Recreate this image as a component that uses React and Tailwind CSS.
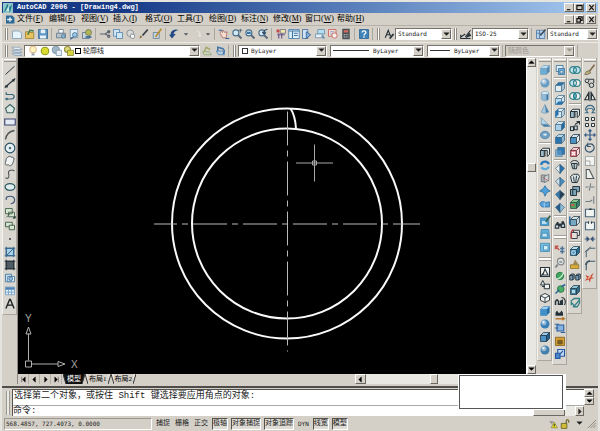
import { useState } from "react";

const menus = [
  ["文件", "F"],
  ["编辑", "E"],
  ["视图", "V"],
  ["插入", "I"],
  ["格式", "O"],
  ["工具", "T"],
  ["绘图", "D"],
  ["标注", "N"],
  ["修改", "M"],
  ["窗口", "W"],
  ["帮助", "H"],
];

const standardTools = [
  "new", "open", "save", "|",
  "print", "preview", "publish", "|",
  "cut", "copyDoc", "paste", "match", "blockEdit", "|",
  "undo", "drop", "redo", "drop", "|",
  "pan", "zoomRt", "zoomWin", "zoomPrev", "|",
  "props", "designCenter", "palettes", "sheetSet", "markup", "calc", "|",
  "help", "|",
];

const drawTools = [
  "line", "xline", "pline", "polygon", "rect", "arc", "circle", "revcloud", "spline", "ellipse",
  "ellipseArc", "insertBlock", "makeBlock", "point", "hatch", "gradient", "region", "table", "mtext",
];

const solidTools = [
  "box", "sphere", "cylinder", "cone", "wedge", "torus", "|",
  "extrude", "revolve", "slice", "section", "interfere", "|",
  "setDraw", "setView", "setProfile", "=",
  "wire2d", "wire3d", "hidden", "flat", "gouraud", "flatEdges", "gouraudEdges",
];

const viewTools = [
  "views", "|", "top", "bottom", "left", "right", "front", "back", "|",
  "swIso", "seIso", "neIso", "nwIso", "|", "camera", "=",
  "orbitPan", "orbitZoom", "orbit", "orbitCont", "swivel", "distance", "clip", "clipFront", "clipBack",
];

const editTools = [
  "union", "subtract", "intersect", "|",
  "extrude", "moveFace", "offsetFace", "deleteFace", "rotateFace", "taperFace", "copyFace", "colorFace", "|",
  "copyEdge", "colorEdge", "|", "imprint", "clean", "separate", "shell", "check",
];

const modifyTools = [
  "erase", "copy", "mirror", "offset", "array", "move", "rotate", "scale", "stretch", "trim",
  "extend", "breakPoint", "break", "join", "chamfer", "fillet", "explode",
];

const ink = "#26323a";

function Cube({ top = "#b9def2", front = "#6aaed8", side = "#2f6ea5", stroke = "#2c5878" }) {
  return (
    <g stroke={stroke} strokeWidth="1" strokeLinejoin="round">
      <path d="M2 6 6 2h8l-4 4z" fill={top} />
      <path d="M2 6h8v8H2z" fill={front} />
      <path d="m10 6 4-4v8l-4 4z" fill={side} />
    </g>
  );
}

function Ball({ color = "#4c8fc2" }) {
  return (
    <g>
      <circle cx="8" cy="8" r="6" fill={color} />
      <circle cx="6.500" cy="6" r="3.500" fill="#fff" opacity=".45" />
      <circle cx="6" cy="5.500" r="1.500" fill="#fff" opacity=".8" />
    </g>
  );
}

function Lens() {
  return (
    <g>
      <path d="m9 9 5 5" stroke="#5b6a78" strokeWidth="2.500" />
      <circle cx="6.500" cy="6.500" r="4" fill="#d5e9f5" stroke="#4a6f8c" strokeWidth="1.500" />
    </g>
  );
}

function Rings({ a = "#bfe3ea", b = "#bfe3ea", mid = "#bfe3ea" }) {
  return (
    <g stroke="#2e7f8c" strokeWidth="1.500">
      <circle cx="5.500" cy="8" r="4.500" fill={a} />
      <circle cx="10.500" cy="8" r="4.500" fill={b} />
      <path d="M8 4.300a4.500 4.500 0 0 1 0 7.400 4.500 4.500 0 0 1 0-7.400z" fill={mid} />
    </g>
  );
}

function Iso({ a, b }) {
  return (
    <g stroke="#34566f" strokeWidth=".8">
      <path d="M8 2 2 7l6 7z" fill={a} />
      <path d="m8 2 6 5-6 7z" fill={b} />
    </g>
  );
}

const icons = {
  new: <path d="M2 4h9l3 3v7H2z" fill="#e6f3fb" stroke="#7096b5" />,
  open: (
    <g>
      <path d="M2 5h5l1 1h5v8H2z" fill="#e5c35d" stroke="#9b7b25" />
      <path d="m5 9 3-6 5 1" fill="none" stroke="#3f7a46" strokeWidth="2" />
    </g>
  ),
  save: (
    <g>
      <path d="M2 2h12v12H2z" fill="#5c96c4" stroke="#315f88" />
      <path d="M5 2h6v5H5zM4 10h8v4H4z" fill="#e8f1f7" />
    </g>
  ),
  print: (
    <g stroke="#5e7384">
      <path d="M5 2h6v5H5z" fill="#fff" />
      <path d="M2 7h12v6H2z" fill="#b5c3cd" />
      <circle cx="11" cy="11" r="2.500" fill="#7fb3d8" />
    </g>
  ),
  preview: (
    <g>
      <path d="M3 2h10v11H3z" fill="#e1effa" stroke="#6485a3" />
      <circle cx="9" cy="9" r="3" fill="#9dcbe9" stroke="#42678a" />
      <path d="m7 12-4 3" stroke="#42678a" strokeWidth="2" />
    </g>
  ),
  publish: (
    <g>
      <path d="M2 6h9v8H2z" fill="#c9d5df" stroke="#53697d" />
      <circle cx="10" cy="6" r="4" fill="#b7b457" stroke="#5d7347" />
      <path d="M6 12h8" stroke="#2d5f93" strokeWidth="2" />
    </g>
  ),
  cut: (
    <g fill="none" stroke="#5a646c" strokeWidth="1.500">
      <path d="M1 8h7l6-4M8 8l6 3" />
      <circle cx="13" cy="5" r="1.500" />
      <circle cx="13" cy="11" r="1.500" />
    </g>
  ),
  copyDoc: (
    <g fill="#cfe6f7" stroke="#4c7ea8">
      <path d="M2 2h8v9H2z" />
      <path d="M6 6h8v8H6z" />
    </g>
  ),
  paste: (
    <g stroke="#758089">
      <circle cx="7" cy="7" r="4.500" fill="#d7d9d6" />
      <path d="m8 8 5 1-1 5-5-1z" fill="#fff" />
    </g>
  ),
  match: (
    <g>
      <path d="m13 2-7 8" stroke="#3c4247" strokeWidth="2.500" />
      <path d="m2 14 1-4 3 2z" fill="#8a6533" />
    </g>
  ),
  blockEdit: (
    <g>
      <path d="M3 6h8v8H3z" fill="#c5d5e0" stroke="#5c7c94" />
      <path d="m14 1-6 8-2 3" stroke="#b98a2d" strokeWidth="2" fill="none" />
    </g>
  ),
  undo: <path d="M2 9c0-4 3-7 8-7l3 1c-4 0-6 2-7 5h3l-5 6-4-5z" fill="#224c83" />,
  redo: <path d="M14 9c0-4-3-7-8-7L3 3c4 0 6 2 7 5H7l5 6 4-5z" fill="#e3e0d9" stroke="#c9c5bc" />,
  drop: <path d="M5 7h6l-3 3z" fill="#4d5257" />,
  pan: (
    <g>
      <path d="M3 7c0-3 2-3 3-1l1-3 2 3 3-1-1 8H6z" fill="#f3ded0" stroke="#a65f5c" />
      <path d="M1 3h5M10 14h5" stroke="#2f5f98" strokeWidth="1.500" />
    </g>
  ),
  zoomRt: (
    <g>
      <Lens />
      <path d="M10 3h5M12.500 1v5" stroke="#39566c" />
    </g>
  ),
  zoomWin: (
    <g>
      <Lens />
      <path d="M4 5h5v3H4z" fill="#3a73a8" />
    </g>
  ),
  zoomPrev: (
    <g>
      <Lens />
      <path d="M14 2c-4 0-5 2-5 5M7 5l2 3 3-2" fill="none" stroke="#2d4664" strokeWidth="1.500" />
    </g>
  ),
  props: (
    <g>
      <path d="M2 2h4v4H2z" fill="#c94848" />
      <path d="M7 2h7v5H7z" fill="#eee7a6" stroke="#6b6787" />
      <path d="M5 7v7M9 7v7M3 9h10" stroke="#6a4f88" strokeWidth="1.500" />
    </g>
  ),
  designCenter: (
    <g>
      <path d="M1 2h14v12H1z" fill="#dff0fa" stroke="#3f73a0" />
      <path d="M1 4h14M6 4v10M8 7h5M8 10h5" stroke="#3f73a0" strokeWidth="1.500" />
    </g>
  ),
  palettes: (
    <g>
      <path d="M2 2h7v12H2z" fill="#cfe4f4" stroke="#375f91" />
      <path d="m7 5 6 4-6 5z" fill="#7eb2dc" stroke="#2f558b" />
    </g>
  ),
  sheetSet: (
    <g stroke="#628ba9">
      <path d="M5 2h9v6H5z" fill="#b5ddef" />
      <path d="M2 8h10v5H2z" fill="#e7eff4" />
      <path d="m10 10 4 4" strokeWidth="2" />
    </g>
  ),
  markup: (
    <g>
      <path d="M2 2h10v9H2z" fill="#f7dcda" stroke="#c4514c" />
      <circle cx="10" cy="10" r="3.500" fill="#f6efee" stroke="#c4514c" />
      <path d="M4 5h6M4 8h3" stroke="#6890b5" />
    </g>
  ),
  calc: (
    <g>
      <path d="M3 1h10v14H3z" fill="#4b5054" />
      <path d="M5 3h6v3H5z" fill="#d46d5f" />
      <path d="M5 9h6M5 12h6" stroke="#d9dcdf" strokeWidth="1.500" strokeDasharray="1.500 1" />
    </g>
  ),
  help: (
    <g>
      <path d="M2 2h12v12H2z" fill="#3f83b8" stroke="#255e90" />
      <path d="M5.500 6c0-3 5-3 5 0 0 2-2.500 1.500-2.500 4M8 11v2" fill="none" stroke="#fff" strokeWidth="1.700" />
    </g>
  ),
  textStyle: (
    <g fill="none" stroke={ink} strokeWidth="1.500">
      <path d="m3 13 4-10 3 8M4 9h5" />
      <path d="m9 14 5-6" strokeWidth="2.500" />
    </g>
  ),
  dimStyle: (
    <g fill="none" stroke={ink} strokeWidth="1.500">
      <path d="M1 9v5h13M1 12l6-4M7 12l7-9" />
      <path d="m9 12 3-5 2 3z" fill={ink} />
    </g>
  ),
  tableStyle: (
    <g>
      <path d="M2 3h11v11H2z" fill="#b4d3ec" stroke="#456f9b" />
      <path d="m14 2-7 8" stroke="#3a4650" strokeWidth="2" />
      <path d="M2 7h6M6 3v11" stroke="#456f9b" />
    </g>
  ),
  layers: (
    <g stroke="#8ba0b2" fill="#c6d8e5">
      <path d="M1 11h10l4 3H5z" />
      <path d="M1 7h10l4 3H5z" />
      <path d="M1 3h10l4 3H5z" fill="#e7eef3" />
    </g>
  ),
  makeCurrent: (
    <g>
      <path d="M2 9h9l3 4H4z" fill="#cfd9b9" stroke="#8b9a72" />
      <path d="m4 9 3-6 5 3" fill="none" stroke="#a5a966" strokeWidth="2" />
    </g>
  ),
  layerPrev: (
    <g>
      <path d="M3 8h9l2 5H6z" fill="#b4cce0" stroke="#4b7aa3" />
      <path d="M5 8V3l7 2c2 2 2 5 0 7" fill="none" stroke="#3f78aa" strokeWidth="2" />
    </g>
  ),
  bulb: (
    <g>
      <circle cx="8" cy="6" r="4.500" fill="#fff3c0" stroke="#d19967" />
      <path d="M6 11h4v3H6z" fill="#9aa1a8" />
    </g>
  ),
  sun: <circle cx="8" cy="8" r="5" fill="#d9dc2e" stroke="#92981d" strokeWidth="1.500" />,
  freeze: (
    <g>
      <circle cx="6.500" cy="6.500" r="5" fill="#9fb8c8" stroke="#708b9e" />
      <path d="M7 7h7v7H7z" fill="#e9f1f6" stroke="#7593a8" />
    </g>
  ),
  lock: (
    <g>
      <circle cx="6" cy="6" r="4" fill="#e4dd7b" stroke="#8c8c3d" strokeWidth="1.500" />
      <path d="M6 7h8v7H6z" fill="#d9d33f" stroke="#82843a" />
    </g>
  ),
  line: <path d="M2 14 14 3" stroke={ink} strokeWidth="1.300" />,
  xline: (
    <g>
      <path d="M1 14 15 2" stroke={ink} strokeWidth="1.500" />
      <path d="M2 11h3v3H2zM11 3h3v3h-3z" fill={ink} />
    </g>
  ),
  pline: (
    <g fill="none" stroke="#35647b" strokeWidth="1.600">
      <path d="M3 3v3h8c4 1 3 6-1 6H4" />
      <path d="M2 12h3" strokeWidth="3" />
    </g>
  ),
  polygon: <path d="m8 2 6 5-2 6H4L2 7z" fill="#d9e8e5" stroke="#3e625f" strokeWidth="1.500" />,
  rect: <path d="M1 4h14v8H1z" fill="#e5ebf5" stroke="#3b4471" strokeWidth="1.500" />,
  arc: <path d="M2 14C3 7 7 3 14 2" fill="none" stroke="#4d5153" strokeWidth="1.700" />,
  circle: (
    <g>
      <circle cx="8" cy="8" r="6.500" fill="#e3eef0" stroke="#244c60" strokeWidth="1.500" />
      <path d="M6.500 8h3M8 6.500v3" stroke="#244c60" strokeWidth="1.500" />
    </g>
  ),
  revcloud: (
    <path
      d="M5 3c2-2 4-1 5 0 3-1 4 2 3 4-1 3-1 4-2 5-1 3-4 3-5 1-4 1-5-1-4-3 1-2 0-6 3-7z"
      fill="#f2f3f0"
      stroke="#4a5760"
      strokeWidth="1.300"
    />
  ),
  spline: <path d="M2 13c5 3 5-3 4-6s3-6 8-3" fill="none" stroke="#4d5153" strokeWidth="1.400" />,
  ellipse: <ellipse cx="8" cy="8" rx="6.500" ry="4.500" fill="#dfeceb" stroke="#2b5a67" strokeWidth="1.700" />,
  ellipseArc: <path d="M3 8C2 4 5 3 8 3c8 0 8 9 1 10" fill="none" stroke="#3c5575" strokeWidth="1.600" />,
  insertBlock: (
    <g fill="#d7e6cf" stroke="#466150" strokeWidth="1.200">
      <path d="M2 2h9v7H2zM6 7h8v6H6z" />
      <path d="m3 14 5-5" />
      <path d="M12 15h3v-3z" fill="#111" />
    </g>
  ),
  makeBlock: (
    <g fill="#d7e6cf" stroke="#466150" strokeWidth="1.300">
      <path d="M2 3h9v6H2z" />
      <path d="M7 7h7v6H7z" />
    </g>
  ),
  point: <circle cx="8" cy="8" r="1.200" fill={ink} />,
  hatch: (
    <g stroke="#31638b" strokeWidth="1.300">
      <path d="M3 3h10v10H3z" fill="#a8cfe8" />
      <path d="M1 3h14M1 13h14M3 1v14M13 1v14M4 12l8-8" />
    </g>
  ),
  gradient: (
    <g stroke="#26323a" strokeWidth="1.400">
      <path d="M3 3h10v10H3z" fill="#4f5c66" />
      <path d="M1 3h14M1 13h14M3 1v14M13 1v14" />
    </g>
  ),
  region: (
    <g stroke="#47799f" strokeWidth="1.200">
      <path d="M2 3h8v10H2z" fill="#c4deef" />
      <path d="M5 6h9v7H5z" fill="#e8f2f9" />
      <circle cx="9" cy="9" r="2.500" fill="#8ebcdc" />
    </g>
  ),
  table: (
    <g stroke="#6d99c0">
      <path d="M2 3h12v10H2z" fill="#dcecf8" />
      <path d="M2 3h12v3H2z" fill="#4c82b5" />
      <path d="M6 6v7M10 6v7M2 9.500h12" />
    </g>
  ),
  mtext: <path d="m2.500 14 5-12h1l5 12M4.500 9.500h7" fill="none" stroke="#1b1f22" strokeWidth="1.800" />,
  box: <Cube stroke="#7fa3bb" side="#4f8ab8" />,
  sphere: <Ball color="#6b9dc2" />,
  cylinder: (
    <g stroke="#7fa3bb">
      <path d="M3 4v8c1 3 9 3 10 0V4z" fill="#8fb9d6" />
      <ellipse cx="8" cy="4" rx="5" ry="2" fill="#dff0f9" />
      <path d="M11 6v7" stroke="#3d75a3" strokeWidth="2" />
    </g>
  ),
  cone: (
    <g>
      <path d="M8 2 3 12c1 2 9 2 10 0z" fill="#a9cbe0" stroke="#7899ae" />
      <path d="m8 3 1 10 4-1z" fill="#4d83ac" />
    </g>
  ),
  wedge: (
    <g stroke="#7899ae">
      <path d="M3 2v9l4 3h8z" fill="#b4d7ea" />
      <path d="m3 11 4 3h8l-4-3z" fill="#3f79a7" />
    </g>
  ),
  torus: (
    <g>
      <ellipse cx="8" cy="8" rx="6" ry="5" fill="#6c9fc3" stroke="#537d9c" />
      <ellipse cx="8" cy="7.500" rx="2.500" ry="1.500" fill="#dbe8ef" />
    </g>
  ),
  extrude: (
    <g stroke={ink} strokeWidth="1.300">
      <path d="M2 6h5v8H2z" fill="#9bb9c9" />
      <path d="m2 6 3-3h9v8l-3 3V6z" fill="#dce4e4" />
      <path d="M8 6v8" />
    </g>
  ),
  revolve: (
    <g fill="none" stroke="#2b79b8" strokeWidth="3">
      <path d="M3 8c0-6 9-6 10-1" />
      <path d="M3 11c3 4 9 3 10-1" stroke="#5fa9dc" />
    </g>
  ),
  slice: (
    <g stroke="#5f686d">
      <path d="M3 4h6v9H3z" fill="#a9b3b7" />
      <path d="m7 6 6-3v8l-6 3z" fill="#cdd5d8" />
      <path d="m5 7 8 5" stroke="#b55a52" />
    </g>
  ),
  section: (
    <path d="m8 1 2.500 4 4.500 3-4.500 2L8 15l-2-5-5-2 4.500-3z" fill="#4ea0d8" stroke="#2b6ca0" />
  ),
  interfere: (
    <g stroke="#2f6ea5">
      <path d="M1 8c2-5 6-3 8-2l5-1v7H4z" fill="#58a2d8" />
      <path d="M7 6v7" stroke="#bfe0f5" />
    </g>
  ),
  setDraw: (
    <g>
      <path d="M2 4h11v10H2z" fill="#4e9fcd" stroke="#377ca5" />
      <path d="M4 8h6v4H4z" fill="#b7def0" />
      <path d="m15 1-6 8" stroke="#37614d" strokeWidth="2.200" />
    </g>
  ),
  setView: (
    <g>
      <path d="M3 2h10l1 12H2z" fill="#60afd9" stroke="#3b84ad" />
      <path d="M4 7h7v5H4z" fill="#c9e7f5" stroke="#3b84ad" />
    </g>
  ),
  setProfile: (
    <g>
      <path d="M2 3h12v11H2z" fill="#74bde1" stroke="#3b84ad" />
      <path d="M6 6h6v6H6z" fill="#d5edf8" stroke="#3b84ad" />
    </g>
  ),
  wire2d: (
    <g fill="#f4f4f0" stroke={ink} strokeWidth="1.400">
      <path d="M2 2h12v12H2z" />
      <path d="m8 4 4 8H5zM2 14l4-5" />
    </g>
  ),
  wire3d: (
    <g fill="#eef1ef" stroke={ink} strokeWidth="1.300">
      <path d="m5 2 3 6H2z" />
      <path d="M7 7h7v6H7zM4 10h4" />
    </g>
  ),
  hidden: (
    <g fill="#f1f2ef" stroke={ink} strokeWidth="1.200">
      <path d="m8 2 6 3v6l-6 3-6-3V5z" />
      <path d="m2 5 6 3 6-3M8 8v6" fill="none" />
    </g>
  ),
  flat: <Cube stroke="#4f92c4" top="#9bd0ef" front="#3f8fc9" side="#246aa3" />,
  gouraud: <Ball color="#3980b8" />,
  flatEdges: <Cube stroke="#1e3444" top="#9cc9e4" front="#4f93c4" side="#255e8e" />,
  gouraudEdges: <Ball color="#427fae" />,
  views: (
    <g stroke="#356b91">
      <path d="M3 2h9v8H3z" fill="#dceefa" />
      <path d="M6 6h8v8H6z" fill="#6eb0dd" />
      <path d="M8 9h4v3H8z" fill="#fff" />
    </g>
  ),
  top: <Cube top="#2974ae" front="#e2edf2" side="#a9c3d3" stroke="#48718e" />,
  bottom: (
    <g>
      <Cube top="#e2edf2" front="#b9dcef" side="#d0dfe7" stroke="#48718e" />
      <path d="m2 14 4-4h8l-4 4z" fill="#2974ae" />
    </g>
  ),
  left: (
    <g>
      <Cube top="#e2edf2" front="#d7e7f0" side="#b8cfdc" stroke="#48718e" />
      <path d="m2 6 4-4v8l-4 4z" fill="#2974ae" />
    </g>
  ),
  right: <Cube top="#d7e7f0" front="#a9d0e8" side="#2268a1" stroke="#48718e" />,
  front: <Cube top="#b8d5e6" front="#2974ae" side="#8db4cc" stroke="#386587" />,
  back: (
    <g stroke="#386587">
      <path d="M5 2h9v9H5z" fill="#2d7bb6" />
      <path d="M2 5h9v9H2z" fill="#5599cb" opacity=".7" />
    </g>
  ),
  swIso: <Iso a="#e8f1f6" b="#2872ad" />,
  seIso: <Iso a="#cde1ed" b="#4b8dbe" />,
  neIso: <Iso a="#327ab1" b="#233e52" />,
  nwIso: <Iso a="#245f92" b="#8fc0de" />,
  camera: (
    <g fill={ink}>
      <path d="M1 9 4 4h2v2h4V3h3l2 5v4H9v-2H7v3H1z" />
      <circle cx="4" cy="10" r="1.700" fill="#bfd0d8" />
      <circle cx="12" cy="9" r="1.700" fill="#bfd0d8" />
    </g>
  ),
  orbitPan: (
    <g fill="none" strokeWidth="2">
      <path d="m2 3 5 5M2 7V3h4" stroke="#c1574e" />
      <path d="M8 6h6M8 10h6M11 3v10" stroke="#51759a" />
    </g>
  ),
  orbitZoom: (
    <g>
      <path d="m5 10-3 4" stroke="#7c8285" strokeWidth="2.500" />
      <circle cx="9" cy="6" r="4.500" fill="#e1e3e1" stroke="#7c8285" strokeWidth="1.500" />
      <path d="M7 5h4v3H7z" fill="#9aa3a6" />
    </g>
  ),
  orbit: (
    <g>
      <circle cx="8" cy="8" r="5" fill="#3fa45c" stroke="#246f45" />
      <path d="M3 12c4 0 8-4 10-9" stroke="#d1efd7" strokeWidth="1.500" fill="none" />
    </g>
  ),
  orbitCont: (
    <g>
      <circle cx="9" cy="8" r="4.500" fill="#4cad65" stroke="#246f45" />
      <path d="m2 14 5-5M10 5l5-3" stroke="#2f6a93" strokeWidth="2" />
    </g>
  ),
  swivel: (
    <g fill="none" stroke={ink} strokeWidth="1.500">
      <path d="M2 12V7l2-2 2 2v4h3V7l2-1v6" strokeWidth="2" />
      <path d="M10 2c5 0 6 6 4 10" />
    </g>
  ),
  distance: (
    <g>
      <path d="M2 9V5l2-3 2 3h2l2-3 2 3v4z" fill={ink} />
      <path d="M2 13h12m-3-2 3 2-3 2" stroke="#b97933" strokeWidth="1.700" fill="none" />
    </g>
  ),
  clip: (
    <g stroke="#2c5f9e" strokeWidth="1.500">
      <path d="M4 4h9v8H4z" fill="#88b5e0" />
      <path d="M1 3h6M1 8h5M9 14h6" />
    </g>
  ),
  clipFront: (
    <g stroke="#7a5a1e">
      <path d="M2 3h12v11H2z" fill="#d5a02e" />
      <path d="M5 7h6v5H5z" fill="#775b28" />
    </g>
  ),
  clipBack: (
    <g stroke="#2757a0" strokeWidth="1.500">
      <path d="M5 2h9v9H5z" fill="#c5daf2" />
      <path d="M2 7h6v7H2z" fill="#4b84cb" />
      <path d="m8 8 4-4" />
    </g>
  ),
  union: <Rings />,
  subtract: <Rings b="#f1f1ec" mid="#f1f1ec" />,
  intersect: <Rings a="#f1f1ec" b="#f1f1ec" mid="#5fb2bf" />,
  moveFace: (
    <g fill="none" stroke={ink} strokeWidth="1.400">
      <path d="M2 9h4v5H2zM7 8h4v5H7z" fill="#cfd8d8" />
      <path d="m8 6 6-4M10 2h4v4" />
    </g>
  ),
  offsetFace: <Cube top="#d1e4ee" front="#4b90c0" side="#e8efef" stroke="#1e3444" />,
  deleteFace: (
    <g>
      <Cube top="#e6cdd0" front="#d77c86" side="#f0dcdc" stroke="#6f2b36" />
      <path d="m4 8 4 4m0-4-4 4" stroke="#fff" strokeWidth="1.500" />
    </g>
  ),
  rotateFace: (
    <g fill="#b6c8ce" stroke={ink} strokeWidth="1.300">
      <path d="M3 6h8l-1 7H5z" />
      <path d="M2 5c2-4 9-4 11 0v4" fill="none" />
      <path d="M7 6v7" />
    </g>
  ),
  taperFace: (
    <g fill="#dbe5e6" stroke={ink} strokeWidth="1.300">
      <path d="m2 6 4-3h6l2 3-3 8H4z" />
      <path d="m6 6 1 7M10 5l-1 9" />
    </g>
  ),
  copyFace: (
    <g fill="#7ca6b8" stroke={ink} strokeWidth="1.300">
      <path d="M5 2h9v7H5z" />
      <path d="M2 6h8v8H2z" />
      <path d="M5 6v8" />
    </g>
  ),
  colorFace: (
    <g>
      <Cube top="#8dc790" front="#4ca362" side="#377e71" stroke="#274e42" />
      <path d="M3 8h4v3H3z" fill="#c25c50" />
    </g>
  ),
  copyEdge: (
    <g>
      <Cube top="#d6e3e6" front="#79a8c2" side="#c4d6de" stroke="#253c4b" />
      <path d="M1 2v11" stroke="#2e70a8" strokeWidth="2" />
    </g>
  ),
  colorEdge: (
    <g>
      <path d="M3 6h8v8H3zM6 6V3h8v7h-3" fill="#e3dfd8" stroke="#37424a" strokeWidth="1.300" />
      <path d="M3 6v8M3 5l3-3" stroke="#b73f42" strokeWidth="2" />
    </g>
  ),
  imprint: (
    <g>
      <Cube top="#b7dcec" front="#5199c3" side="#2d6c94" stroke="#203d4f" />
      <circle cx="6" cy="10" r="2.500" fill="none" stroke="#e7f4fa" />
    </g>
  ),
  clean: (
    <g>
      <path d="M2 9h11v5H2z" fill="#d8ae39" stroke="#8c6c20" />
      <path d="m8 2 5 7H5z" fill="#9c8755" />
    </g>
  ),
  separate: (
    <g fill="#789fba" stroke={ink} strokeWidth="1.200">
      <path d="m1 6 2-2h4v6l-2 2H1zM9 6l2-2h4v6l-2 2H9z" />
      <path d="M1 6h4v6M9 6h4v6" fill="none" />
    </g>
  ),
  shell: (
    <g>
      <Cube top="#90c2d6" front="#427f9a" side="#336b84" stroke="#203d4f" />
      <path d="M4 8h4v4H4z" fill="#b4d9e6" />
    </g>
  ),
  check: (
    <g fill="none" stroke="#348087" strokeWidth="1.700">
      <path d="M3 11V5l4-3h7v6l-3 5H5" />
      <path d="m4 8 3 4 7-8" />
    </g>
  ),
  erase: (
    <g>
      <path d="m14 1-7 9" stroke="#7e6547" strokeWidth="2" />
      <path d="m3 10 4-1 2 3-5 2H1z" fill="#b9b07f" stroke="#70644a" />
    </g>
  ),
  copy: (
    <g fill="none" stroke={ink} strokeWidth="1.300">
      <circle cx="4" cy="5" r="2.500" />
      <circle cx="10" cy="11" r="3" />
      <path d="M6 3h7v5M5 8l3 3" />
    </g>
  ),
  mirror: <path d="M6 4v9H1zM10 4v9h5zM8 2v13" fill="#e5e7e3" stroke={ink} strokeWidth="1.400" />,
  offset: (
    <g fill="none" stroke="#3d6a83" strokeWidth="1.600">
      <path d="M1 13h4c-3-3-1-6 3-6s6 3 3 6h4" />
      <path d="M2 10c-1-9 13-9 12 0" />
    </g>
  ),
  array: <path d="M2 2h4v4H2zM10 2h4v4h-4zM2 10h4v4H2zM10 10h4v4h-4z" fill="#f0f0ed" stroke={ink} strokeWidth="1.300" />,
  move: (
    <path
      d="M8 1v14M1 8h14M6 3l2-2 2 2M6 13l2 2 2-2M3 6 1 8l2 2M13 6l2 2-2 2"
      fill="none"
      stroke="#375d86"
      strokeWidth="1.600"
    />
  ),
  rotate: <path d="M5 3c-8 5 0 14 6 9 5-4 2-11-5-9M5 1v5h4" fill="none" stroke="#34526d" strokeWidth="1.500" />,
  scale: (
    <g fill="#f3f3ef" stroke="#8f9799">
      <path d="M2 2h12v12H2z" />
      <path d="M2 8h6v6H2z" />
    </g>
  ),
  stretch: <path d="M3 2h4l6 12H3z" fill="#eef0ec" stroke="#4d5558" strokeWidth="1.400" />,
  trim: <path d="M2 8h4M9 8h5M9 3l-2 10" fill="none" stroke="#717d82" strokeWidth="1.400" />,
  extend: <path d="M2 10h6l3-2M13 3v10" fill="none" stroke="#717d82" strokeWidth="1.400" />,
  breakPoint: (
    <g>
      <path d="M2 3h12v10H2z" fill="#f2f4f1" stroke="#48647a" strokeWidth="1.500" />
      <path d="M7 2h3v2H7z" fill={ink} />
    </g>
  ),
  break: (
    <g>
      <path d="M6 3H2v10h12V3h-4" fill="#f2f4f1" stroke="#48647a" strokeWidth="1.500" />
      <path d="M6 2v3M10 2v3" stroke={ink} strokeWidth="1.500" />
    </g>
  ),
  join: <path d="M1 8h6M9 8h6M4 5l3 3-3 3zM12 5 9 8l3 3z" fill="#385479" stroke="#385479" strokeWidth="1.300" />,
  chamfer: <path d="M3 15V8l5-5h7M1 8l8-7" fill="none" stroke="#4b6170" strokeWidth="1.300" />,
  fillet: <path d="M3 15V9c0-4 2-6 6-6h6M2 8c0-3 3-6 6-6" fill="none" stroke="#405a6b" strokeWidth="1.500" />,
  explode: (
    <g>
      <path d="m13 1-3 6 4 1-5 1-1 5-2-4-5 2 3-4-2-4 5 2z" fill="#c84b36" />
      <path d="m5 9 4-4" stroke="#f4c6a4" strokeWidth="1.500" />
    </g>
  ),
};

function Icon({ name }) {
  return (
    <svg viewBox="0 0 16 16" className="size-3 shrink-0" aria-hidden="true">
      {icons[name]}
    </svg>
  );
}

function Tool({ name }) {
  return (
    <button
      type="button"
      aria-label={name}
      className={`flex h-[13px] shrink-0 items-center justify-center ${name === "drop" ? "w-[9px]" : "w-[13px]"}`}
    >
      <Icon name={name} />
    </button>
  );
}

function Grip() {
  return <span className="mx-0.5 h-3 w-[3px] shrink-0 border-x border-[#8f8c85] bg-white" />;
}

function ToolColumn({ items, className = "" }) {
  return (
    <div
      role="toolbar"
      className={`flex w-[15px] shrink-0 flex-col items-center self-start border-r border-b border-[#aaa69d] border-l border-l-[#f4f2ed] bg-[#d9d6cf] pt-px pb-1 ${className}`}
    >
      <span className="mb-px h-[3px] w-3 border-y border-white border-b-[#9a978f]" />
      {items.map((item, i) => {
        if (item === "|") {
          return <span key={i} className="my-px h-0.5 w-3 shrink-0 border-t border-[#a29f97] bg-white" />;
        }
        if (item === "=") {
          return <span key={i} className="my-1 h-1 w-3 shrink-0 border-y border-[#a29f97] bg-white" />;
        }
        return <Tool key={i} name={item} />;
      })}
    </div>
  );
}

function Arrow({ dir = "down", className = "" }) {
  const paths = {
    down: "M1 2h6L4 5z",
    up: "M1 5h6L4 2z",
    left: "M5 1v6L2 4z",
    right: "M3 1v6l3-3z",
    first: "M2 1v6M6 1v6L3 4z",
    last: "M6 1v6M2 1v6l3-3z",
  };

  return (
    <svg viewBox="0 0 8 8" className={`size-[7px] ${className}`} aria-hidden="true">
      <path d={paths[dir]} fill="currentColor" stroke="currentColor" strokeWidth=".5" />
    </svg>
  );
}

const raised = "border border-white border-r-[#6b6861] border-b-[#6b6861] bg-[#d4d0c8]";

function ScrollButton({ dir, className = "" }) {
  return (
    <button
      type="button"
      aria-label={`Scroll ${dir}`}
      className={`flex shrink-0 items-center justify-center ${raised} ${className}`}
    >
      <Arrow dir={dir} />
    </button>
  );
}

function Combo({ label, value, options = [value], disabled, className = "", children }) {
  return (
    <label
      className={`relative flex h-3 items-center border border-[#77746d] border-r-white border-b-white pr-2.5 pl-0.5 ${
        disabled ? "bg-[#d0ccc4] text-[#9b9890]" : "bg-white text-[#222]"
      } ${className}`}
    >
      {children}
      <select
        aria-label={label}
        disabled={disabled}
        defaultValue={value}
        className="h-2.5 min-w-0 flex-1 appearance-none bg-transparent leading-[10px] outline-none"
      >
        {options.map((option) => (
          <option key={option}>{option}</option>
        ))}
      </select>
      <span
        className={`pointer-events-none absolute inset-y-0 right-0 flex w-2.5 items-center justify-center ${raised}`}
      >
        <Arrow />
      </span>
    </label>
  );
}

function WindowButton({ kind }) {
  const paths = {
    Minimize: "M1 6.500h4",
    Maximize: "M1 1.500h6v5H1zM1 2h6",
    Restore: "M3 3V1h4v4H5M1 3h4v4H1z",
    Close: "m1.500 1 5 6m0-6-5 6",
  };

  return (
    <button type="button" aria-label={kind} className={`flex h-[9px] w-2.5 items-center justify-center ${raised}`}>
      <svg viewBox="0 0 8 8" className="size-[7px]" aria-hidden="true">
        <path d={paths[kind]} fill="none" stroke="#111" strokeWidth="1.300" />
      </svg>
    </button>
  );
}

function TitleBar() {
  return (
    <header className="flex h-[11px] items-center gap-1 bg-linear-to-r from-[#173a87] from-20% to-[#a6caf0] pr-0.5 pl-px">
      <svg viewBox="0 0 16 16" className="size-[10px]" aria-hidden="true">
        <path d="M0 0h16v16H0z" fill="#8fc6ca" />
        <path d="M1 15 7 1l3 6 5-5-4 13-4-5z" fill="#207c88" />
        <path d="m5 12 4-8 1 9z" fill="#d5eced" />
      </svg>
      <h1 className="flex-1 font-['Liberation_Mono','DejaVu_Sans_Mono',monospace] text-[7px] leading-none font-bold whitespace-pre text-white">
        AutoCAD 2006 - [Drawing4.dwg]
      </h1>
      <div className="flex">
        <WindowButton kind="Minimize" />
        <WindowButton kind="Maximize" />
        <span className="w-0.5" />
        <WindowButton kind="Close" />
      </div>
    </header>
  );
}

function MenuBar() {
  return (
    <nav className="flex h-3 items-center pr-0.5 pl-1 text-[8px] leading-none">
      <svg viewBox="0 0 16 16" className="mr-0.5 size-[9px]" aria-hidden="true">
        <path d="M0 1h11l4 4v10H0z" fill="#2c6993" />
        <path d="M2 8h9M7 4v8" stroke="#e5f2f7" strokeWidth="2.500" />
      </svg>
      <div className="flex flex-1 gap-[6px]">
        {menus.map(([text, key]) => (
          <button key={key} type="button" className="w-[26px] text-left whitespace-nowrap">
            {text}(<u>{key}</u>)
          </button>
        ))}
      </div>
      <WindowButton kind="Minimize" />
      <WindowButton kind="Restore" />
      <span className="w-0.5" />
      <WindowButton kind="Close" />
    </nav>
  );
}

function Sep() {
  return <span className="mx-0.5 h-3 w-px shrink-0 bg-[#aaa79f]" />;
}

function StandardBar() {
  return (
    <div role="toolbar" className="flex h-[17px] items-center border-t border-[#b5b2aa] pl-px">
      <Grip />
      {standardTools.map((item, i) => (item === "|" ? <Sep key={i} /> : <Tool key={i} name={item} />))}
      <Grip />
      <Tool name="textStyle" />
      <Combo
        label="Text style"
        value="Standard"
        className="w-[57px] font-['DejaVu_Sans_Mono',monospace] text-[6px]"
      />
      <Grip />
      <Tool name="dimStyle" />
      <Combo
        label="Dimension style"
        value="ISO-25"
        className="w-[57px] font-['DejaVu_Sans_Mono',monospace] text-[6px]"
      />
      <Sep />
      <Tool name="tableStyle" />
      <Combo
        label="Table style"
        value="Standard"
        className="min-w-0 flex-1 font-['DejaVu_Sans_Mono',monospace] text-[6px]"
      />
    </div>
  );
}

function LayerBar() {
  return (
    <div
      role="toolbar"
      className="flex h-4 items-center border-t border-[#eceae5] pl-px font-['DejaVu_Sans_Mono','Noto_Sans_CJK_SC',monospace] text-[6px]"
    >
      <Grip />
      <Tool name="layers" />
      <Combo label="Layer" value="轮廓线" className="ml-px w-[176px] text-[7px]">
        <Icon name="bulb" />
        <Icon name="sun" />
        <Icon name="freeze" />
        <Icon name="lock" />
        <span className="mr-0.5 size-[6px] border border-black" />
      </Combo>
      <Tool name="makeCurrent" />
      <Tool name="layerPrev" />
      <Sep />
      <Grip />
      <Combo label="Color" value="ByLayer" className="w-[89px]">
        <span className="mr-[3px] ml-px size-[6px] border border-[#333]" />
      </Combo>
      <Combo label="Linetype" value="ByLayer" className="ml-[3px] w-[94px]">
        <span className="mr-1 h-px w-9 bg-[#333]" />
      </Combo>
      <Combo label="Lineweight" value="ByLayer" className="ml-[3px] w-[73px]">
        <span className="mr-1 h-px w-5 bg-[#333]" />
      </Combo>
      <Sep />
      <Combo label="Plot style" value="随颜色" disabled className="w-[70px] text-[7px]" />
      <Sep />
    </div>
  );
}

function Drawing() {
  return (
    <svg viewBox="0 0 508 315" className="min-h-0 w-full flex-1 bg-black" role="img" aria-label="Drawing4">
      <g fill="none" stroke="#fafafa" strokeWidth="2">
        <circle cx="269" cy="165" r="115" />
        <circle cx="269" cy="165" r="95" />
        <path d="M272.500 50c4 6 5 12 5.500 20" />
      </g>
      <g stroke="#b9b9b9" strokeWidth="1" strokeDasharray="34 5 6 5">
        <path d="M136 165.500h266" strokeDashoffset="11" />
        <path d="M269.500 53v240" />
      </g>
      <g fill="none" stroke="#a8a8a8">
        <path d="M278 104.500h37M296.500 86v37" />
        <path d="M294.500 102.500h4v4h-4z" />
      </g>
      <g fill="none" stroke="#b0b0b0">
        <path d="M7.500 302.500h6v6h-6zM10.500 302v-27M14 305.500h26" />
        <path d="m8 275.500 2.500-7 2.500 7zM40 303l7 2.500-7 2.500z" />
      </g>
      <g fill="#a8a8a8" fontFamily="Liberation Sans, sans-serif" fontSize="10">
        <text x="7" y="263">Y</text>
        <text x="53" y="309">X</text>
      </g>
    </svg>
  );
}

function LayoutTabs() {
  const [active, setActive] = useState("模型");

  return (
    <div className="flex h-2.5 items-stretch bg-[#d4d0c8] text-[7px] leading-none">
      {["first", "left", "right", "last"].map((dir) => (
        <button
          key={dir}
          type="button"
          aria-label={dir}
          className="flex w-[11px] items-center justify-center border-r border-[#b1aea6]"
        >
          <Arrow dir={dir} />
        </button>
      ))}
      <div role="tablist" className="flex pl-px">
        {["模型", "布局1", "布局2"].map((tab) => (
          <button
            key={tab}
            type="button"
            role="tab"
            aria-selected={tab === active}
            onClick={() => setActive(tab)}
            className={`flex items-center whitespace-nowrap ${tab === active ? "text-white" : "text-black"}`}
          >
            <svg viewBox="0 0 3 10" className="h-2.5 w-[3px]" aria-hidden="true">
              <path d="M0 0h3v10z" fill={tab === active ? "#111" : "#e4e1da"} />
              <path d="m0 0 3 10" stroke="#333" />
            </svg>
            <span className={`flex h-full items-center px-px ${tab === active ? "bg-[#111]" : ""}`}>{tab}</span>
            <svg viewBox="0 0 3 10" className="h-2.5 w-[3px]" aria-hidden="true">
              <path d="M0 0h3L0 10z" fill={tab === active ? "#111" : "#e4e1da"} />
              <path d="M3 0 0 10" stroke="#333" />
            </svg>
          </button>
        ))}
      </div>
      <div className="flex-1" />
      <div className="flex w-[181px] bg-[#e9e7e2]">
        <ScrollButton dir="left" className="w-[11px]" />
        <span className="w-16" />
        <span className={`w-2 ${raised}`} />
      </div>
    </div>
  );
}

function CommandLine() {
  return (
    <section className="mt-0.5 flex border-t-2 border-[#4f4d49] pt-px pr-1 pl-1">
      <span className="mt-0.5 mr-0.5 h-6 w-1 border-x border-[#9a978f] bg-[#eceae5]" />
      <div className="min-w-0 flex-1 border-t border-l border-[#55534e] font-['Liberation_Mono','Noto_Sans_CJK_SC',monospace] text-[9px] text-[#222]">
        <p className="h-4 border-b border-[#aaa] bg-white pl-px leading-[13px] whitespace-pre">
          选择第二个对象，或按住 Shift 键选择要应用角点的对象:
        </p>
        <div className="flex h-2.5 items-center bg-white leading-[10px]">
          <label className="flex flex-1 items-center">
            命令:
            <input aria-label="Command" className="h-2.5 min-w-0 flex-1 bg-transparent outline-none" />
          </label>
          <span className={`h-full w-8 ${raised}`} />
          <span className="h-full w-2.5 bg-[#ebe9e4]" />
          <ScrollButton dir="right" className="h-full w-[9px]" />
        </div>
      </div>
      <div className="flex w-[10px] flex-col">
        <ScrollButton dir="up" className="h-2" />
        <ScrollButton dir="down" className="h-2" />
      </div>
    </section>
  );
}

const modes = [
  ["捕捉", false],
  ["栅格", false],
  ["正交", false],
  ["极轴", true],
  ["对象捕捉", true],
  ["对象追踪", true],
  ["DYN", false],
  ["线宽", true],
  ["模型", true],
];

function StatusBar() {
  const [on, setOn] = useState(() => Object.fromEntries(modes));

  return (
    <footer className="flex h-[15px] items-center px-0.5 font-['DejaVu_Sans_Mono','Noto_Sans_CJK_SC',monospace] leading-none text-[#222]">
      <output className="flex h-3 w-[148px] items-center border border-[#9a978f] border-r-white border-b-white pl-px text-[6px] whitespace-pre">
        568.4857, 727.4073, 0.0000
      </output>
      <div className="flex flex-1 gap-[3px] pl-[3px] text-[7px]">
        {modes.map(([label]) => (
          <button
            key={label}
            type="button"
            aria-pressed={on[label]}
            onClick={() => setOn({ ...on, [label]: !on[label] })}
            className={`flex h-3 items-center border whitespace-nowrap ${
              on[label]
                ? "border-[#55534e] border-r-white border-b-white bg-[#dfdcd6]"
                : "border-transparent"
            } ${label === "DYN" ? "text-[6px]" : ""}`}
          >
            {label}
          </button>
        ))}
      </div>
      <div className="flex items-center gap-0.5">
        <svg viewBox="0 0 16 16" className="size-[10px]" aria-hidden="true">
          <path d="M2 3h7l-3 6z" fill="#9a9b99" />
          <path d="m10 5 5 9H5z" fill="#f0e629" stroke="#77722b" />
          <path d="M10 8v4" stroke="#222" strokeWidth="1.500" />
        </svg>
        <svg viewBox="0 0 16 16" className="size-[10px]" aria-hidden="true">
          <path d="M2 7h9v8H2z" fill="#d2bd38" stroke="#716725" strokeWidth="1.500" />
          <path d="M10 7V3c1-3 4-2 4 1v2" fill="none" stroke="#716725" strokeWidth="2" />
        </svg>
        <Arrow className="ml-1" />
        <svg viewBox="0 0 10 10" className="ml-0.5 size-[9px]" aria-hidden="true">
          <path d="m1 10 9-9M4 10l6-6M7 10l3-3" stroke="#88857e" />
        </svg>
      </div>
    </footer>
  );
}

export default function App() {
  return (
    <div className="relative flex min-h-screen flex-col overflow-hidden border-x-2 border-t-2 border-[#e6e4de] bg-[#d4d0c8] font-['Liberation_Serif','Noto_Sans_CJK_SC',serif] text-black">
      <TitleBar />
      <MenuBar />
      <StandardBar />
      <LayerBar />

      <main className="flex flex-1 items-stretch pr-px">
        <ToolColumn items={drawTools} />
        <section className="flex min-w-0 flex-1 flex-col border-l border-[#8d8a83]">
          <div className="flex flex-1">
            <div className="flex min-w-0 flex-1 flex-col">
              <Drawing />
            </div>
            <div className="flex w-2.5 flex-col border-l border-white bg-[#e9e7e2]">
              <ScrollButton dir="up" className="h-[9px]" />
              <span className="flex-1" />
              <span className={`h-[9px] ${raised}`} />
              <span className="flex-2" />
              <ScrollButton dir="down" className="h-[9px]" />
            </div>
          </div>
          <LayoutTabs />
        </section>
        <ToolColumn items={solidTools} className="ml-px" />
        <ToolColumn items={viewTools} />
        <ToolColumn items={editTools} />
        <ToolColumn items={modifyTools} />
      </main>

      <CommandLine />
      <StatusBar />

      <div className="absolute right-8 bottom-[21px] h-9 w-[108px] border border-white bg-white pr-0.5">
        <div className="h-full border border-[#555] bg-white" />
      </div>
    </div>
  );
}
